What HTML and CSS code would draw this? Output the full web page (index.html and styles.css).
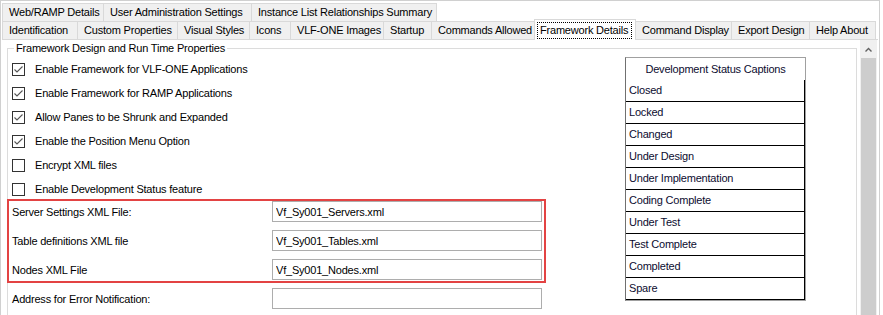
FILE: index.html
```html
<!DOCTYPE html>
<html lang="en">
<head>
  <meta charset="UTF-8" />
  <title>Framework Details</title>
  <link rel="stylesheet" href="styles.css">
</head>
<body>
  <div class="window">
    <div class="tab-row upper">
      <div class="tab">Web/RAMP Details</div>
      <div class="tab">User Administration Settings</div>
      <div class="tab">Instance List Relationships Summary</div>
    </div>
    <div class="tab-row lower">
      <div class="tab">Identification</div>
      <div class="tab">Custom Properties</div>
      <div class="tab">Visual Styles</div>
      <div class="tab">Icons</div>
      <div class="tab">VLF-ONE Images</div>
      <div class="tab">Startup</div>
      <div class="tab">Commands Allowed</div>
      <div class="tab active"><span class="focus">Framework Details</span></div>
      <div class="tab">Command Display</div>
      <div class="tab">Export Design</div>
      <div class="tab">Help About</div>
    </div>

    <div class="panel">
      <div class="content">
        <fieldset class="group">
          <legend>Framework Design and Run Time Properties</legend>
          <div class="group-body">
            <div class="settings">
              <div class="options">
                <div class="option">
                  <span class="check on"><svg width="11" height="11" viewBox="0 0 11 11"><polyline points="1.5,5.5 4,8 9.5,2.5" /></svg></span>
                  Enable Framework for VLF-ONE Applications
                </div>
                <div class="option">
                  <span class="check on"><svg width="11" height="11" viewBox="0 0 11 11"><polyline points="1.5,5.5 4,8 9.5,2.5" /></svg></span>
                  Enable Framework for RAMP Applications
                </div>
                <div class="option">
                  <span class="check on"><svg width="11" height="11" viewBox="0 0 11 11"><polyline points="1.5,5.5 4,8 9.5,2.5" /></svg></span>
                  Allow Panes to be Shrunk and Expanded
                </div>
                <div class="option">
                  <span class="check on"><svg width="11" height="11" viewBox="0 0 11 11"><polyline points="1.5,5.5 4,8 9.5,2.5" /></svg></span>
                  Enable the Position Menu Option
                </div>
                <div class="option">
                  <span class="check"></span>
                  Encrypt XML files
                </div>
                <div class="option">
                  <span class="check"></span>
                  Enable Development Status feature
                </div>
              </div>

              <div class="files">
                <div class="field">
                  <span class="field-label">Server Settings XML File:</span>
                  <input class="field-input" type="text" value="Vf_Sy001_Servers.xml" />
                </div>
                <div class="field">
                  <span class="field-label">Table definitions XML file</span>
                  <input class="field-input" type="text" value="Vf_Sy001_Tables.xml" />
                </div>
                <div class="field">
                  <span class="field-label">Nodes XML File</span>
                  <input class="field-input" type="text" value="Vf_Sy001_Nodes.xml" />
                </div>
              </div>

              <div class="field extra">
                <span class="field-label">Address for Error Notification:</span>
                <input class="field-input" type="text" value="" />
              </div>
            </div>

            <div class="captions">
              <div class="captions-head">Development Status Captions</div>
              <div class="caption">Closed</div>
              <div class="caption">Locked</div>
              <div class="caption">Changed</div>
              <div class="caption">Under Design</div>
              <div class="caption">Under Implementation</div>
              <div class="caption">Coding Complete</div>
              <div class="caption">Under Test</div>
              <div class="caption">Test Complete</div>
              <div class="caption">Completed</div>
              <div class="caption">Spare</div>
            </div>
          </div>
        </fieldset>
      </div>

      <div class="scrollbar">
        <div class="scroll-up">
          <svg width="7" height="5" viewBox="0 0 7 5"><polyline points="0.5,4.5 3.5,1.5 6.5,4.5" /></svg>
        </div>
        <div class="scroll-thumb"></div>
      </div>
    </div>
  </div>
</body>
</html>
```

FILE: styles.css
```css
* {
  box-sizing: border-box;
}
body {
  margin: 0;
  background: #fff;
  font-family: "Liberation Sans", Arial, sans-serif;
  font-size: 11px;
  letter-spacing: -0.2px;
  color: #000;
}
.window {
  width: 880px;
  height: 315px;
  border: 1px solid #d0d0d0;
  border-bottom: 0;
  padding: 2px 1px 0 1px;
  overflow: hidden;
}

/* tabs */
.tab-row {
  display: grid;
}
.upper {
  grid-template-columns: 101px 148px 186px;
}
.lower {
  grid-template-columns: 75px 100px 72px 41px 93px 48px 103px 101px 96px 78px 67px;
  border-bottom: 1px solid #d9d9d9;
}
.tab {
  height: 18px;
  line-height: 17px;
  padding-left: 6px;
  border: 1px solid #d9d9d9;
  border-right: 0;
  border-bottom: 0;
  background: #f0f0f0;
  white-space: nowrap;
  overflow: hidden;
}
.tab:last-child {
  border-right: 1px solid #d9d9d9;
}
.tab.active {
  position: relative;
  height: 21px;
  margin: -2px -1px -1px 0;
  padding: 2px 0 0 2px;
  background: #fff;
  border-right: 1px solid #d9d9d9;
}
.focus {
  display: inline-block;
  height: 17px;
  line-height: 15px;
  padding: 0 3px 0 2px;
  border: 1px dotted #000;
}

/* panel */
.panel {
  display: flex;
  height: 275px;
}
.content {
  flex: 1;
  overflow: hidden;
}
.group {
  margin: 2px 3px 0 5px;
  padding: 0;
  min-width: 0;
  height: 300px;
  border: 1px solid #dcdcdc;
}
.group legend {
  margin-left: 6px;
  padding: 0 2px;
  line-height: 13px;
}
.group-body {
  display: flex;
  align-items: flex-start;
}
.settings {
  width: 538px;
}
.options {
  padding-top: 2px;
}
.option {
  display: flex;
  align-items: center;
  height: 24px;
  padding-left: 4px;
}
.check {
  width: 13px;
  height: 13px;
  margin-right: 10px;
  border: 1px solid #333;
  background: #fff;
}
.check svg {
  display: block;
}
.check polyline {
  fill: none;
  stroke: #555;
  stroke-width: 1.1;
}

/* file fields */
.files {
  display: grid;
  gap: 8px;
  margin: -2px 0 0 -1px;
  width: 539px;
  padding: 0 2px 1px 3px;
  border: 2px solid #e34343;
}
.field {
  display: flex;
  align-items: center;
}
.field-label {
  width: 260px;
}
.field-input {
  width: 270px;
  height: 21px;
  margin: 0;
  padding: 0 3px;
  border: 1px solid #adadad;
  font: inherit;
  letter-spacing: inherit;
  color: #000;
  outline: none;
}
.field.extra {
  margin-top: 5px;
  padding-left: 4px;
}

/* status captions grid */
.captions {
  width: 181px;
  margin: 2px 0 0 79px;
  border: 1px solid #a0a0a0;
  border-left-color: #707070;
  color: #0c0c30;
}
.captions-head {
  height: 22px;
  line-height: 22px;
  text-align: center;
}
.caption {
  height: 22px;
  line-height: 21px;
  padding-left: 3px;
  border-right: 1px solid #000;
  border-bottom: 1px solid #000;
}

/* scrollbar */
.scrollbar {
  width: 17px;
  margin-right: 1px;
  background: #f0f0f0;
}
.scroll-up {
  height: 18px;
  display: flex;
  align-items: center;
  justify-content: center;
}
.scroll-up svg {
  display: block;
}
.scroll-up polyline {
  fill: none;
  stroke: #606060;
  stroke-width: 1.4;
}
.scroll-thumb {
  height: 260px;
  margin: 0 1px;
  background: #cdcdcd;
}
```
